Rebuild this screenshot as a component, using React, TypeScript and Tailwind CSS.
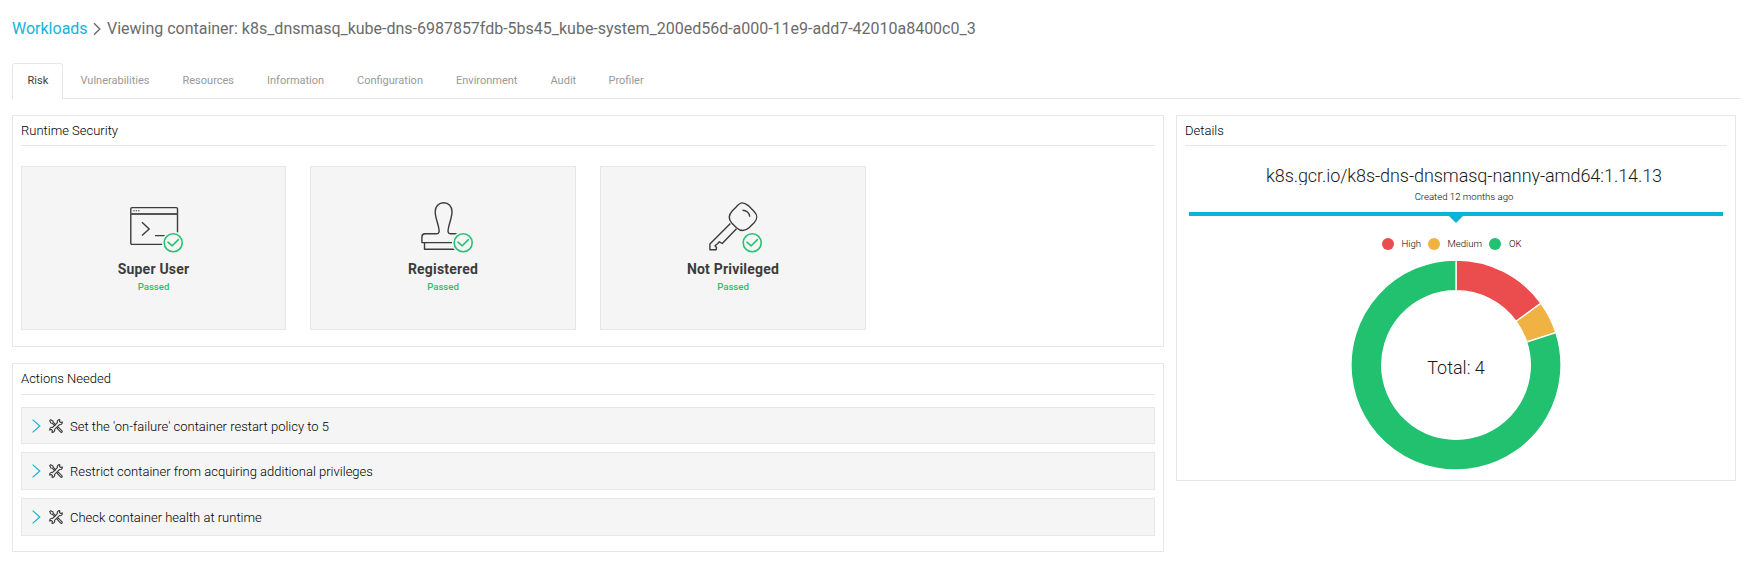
import type { ReactNode } from "react";

const tabs = [
  { label: "Vulnerabilities", width: "w-[102px]" },
  { label: "Resources", width: "w-[84.5px]" },
  { label: "Information", width: "w-[90px]" },
  { label: "Configuration", width: "w-[99px]" },
  { label: "Environment", width: "w-[94.5px]" },
  { label: "Audit", width: "w-[58px]" },
  { label: "Profiler", width: "w-[60px]" },
];

const actions = [
  "Set the 'on-failure' container restart policy to 5",
  "Restrict container from acquiring additional privileges",
  "Check container health at runtime",
];

function PassedBadge() {
  return (
    <g fill="none" stroke="#26c271" strokeWidth="1.6">
      <circle cx="43.2" cy="40.7" r="11.2" fill="#f5f5f5" stroke="none" />
      <circle cx="43.2" cy="40.7" r="9" />
      <path d="M38 40.2l4.2 3.6 6.2-6.2" strokeLinejoin="round" strokeLinecap="round" />
    </g>
  );
}

function IconFrame({ children }: { children: ReactNode }) {
  return (
    <svg width="54" height="52" viewBox="0 0 54 52" fill="none" stroke="#3c3c3c" strokeWidth="1.4" strokeLinejoin="round">
      {children}
      <PassedBadge />
    </svg>
  );
}

function TerminalIcon() {
  return (
    <IconFrame>
      <rect x="0.8" y="5.6" width="46.7" height="36.8" rx="1.2" />
      <path d="M1 12.1h46.3" stroke="#555555" strokeWidth="2" />
      <path d="M3.3 8.8h6.4" strokeDasharray="1.4 1" strokeWidth="1" />
      <path d="M12 20.2l7.2 6.8-7.2 6.6M25 33.6h12" />
    </IconFrame>
  );
}

function StampIcon() {
  return (
    <IconFrame>
      <path d="M48 34.5c0-1.6-1.2-2.8-2.800-2.800h-15c-2.400 0-2.400-2.600-1.900-4.800.5-4.700 3.700-11 3.700-17.400 0-5.200-3.300-8.800-8.300-8.800s-8.500 3.600-8.500 8.800c0 6.400 3.200 12.700 3.700 17.400.5 2.200.5 4.800-1.900 4.800h-12c-2 0-3.100 1.300-3.100 3.200v5.700h46.100z" />
      <path d="M4.500 40.700v6.500h39.500" />
    </IconFrame>
  );
}

function KeyIcon() {
  return (
    <IconFrame>
      <path d="M33 .9c2.800 0 4.600 1.300 6.300 2.700l5.600 5.600c4.100 4.300 4.100 7.400 0 11.700l-4.600 4.600c-4.500 4.100-8.500 4.300-12.800.3l-4.600-4.600c-4-4.300-3.500-8.200.5-12.500l4-4c2.100-2.200 3.500-3.800 5.600-3.800z" />
      <path d="M21.400 21.400L.9 42.100v5.600h6.300l.3-2.200-1.500-1.800 2.800-2.200 1.600-1.700 2.800 1.700 14.300-14.800" />
      <path d="M33.500 8.300c3.800 0 7 2.600 7.300 6.500" />
    </IconFrame>
  );
}

function ToolsIcon() {
  return (
    <svg className="ml-[8px] shrink-0" width="14" height="14" viewBox="0 0 14 14" fill="none" stroke="#3c3c3c" strokeWidth="1.1" strokeLinejoin="round">
      <path d="M10.900 .7c-1.600-.3-3.100 1.300-2.500 3L3.700 8.400C2 7.900.4 9.500.7 11.100l1.700-.6 1.100 1.100-.6 1.700c1.700.3 3.200-1.200 2.700-2.900l4.800-4.800c1.700.5 3.200-1.100 2.900-2.700l-1.700.6-1.100-1.100z" />
      <path d="M.7 1.700l1-1 2.300 1.200.2 1.300 2.400 2.400-1 1L3.200 4.200l-1.300-.2z" />
      <path d="M8.200 9.300l1.100-1.100 3.700 3.600c.8.800-.5 2-1.300 1.300z" />
    </svg>
  );
}

const cards = [
  { title: "Super User", icon: <TerminalIcon />, shift: "pl-[6px]", width: "w-[265px]" },
  { title: "Registered", icon: <StampIcon />, shift: "pl-[7px]", width: "w-[266px]" },
  { title: "Not Privileged", icon: <KeyIcon />, shift: "pl-[6px]", width: "w-[266px]" },
];

function Panel({
  title,
  className,
  headingClass = "h-[30px]",
  children,
}: {
  title: string;
  className: string;
  headingClass?: string;
  children: ReactNode;
}) {
  return (
    <section className={`border border-[#e7e7e7] px-2 ${className}`}>
      <h2 className={`border-b border-[#e7e7e7] pt-[5px] text-[13px] leading-[20px] font-light text-black ${headingClass}`}>
        {title}
      </h2>
      {children}
    </section>
  );
}

function slice(from: number, to: number) {
  const point = (t: number, r: number) =>
    `${105 + r * Math.sin(t * 2 * Math.PI)} ${105 - r * Math.cos(t * 2 * Math.PI)}`;
  const large = to - from > 0.5 ? 1 : 0;
  return `M${point(from, 105)}A105 105 0 ${large} 1 ${point(to, 105)}L${point(to, 74.3)}A74.3 74.3 0 ${large} 0 ${point(from, 74.3)}Z`;
}

function Donut() {
  return (
    <svg className="mx-auto block overflow-visible" width="210" height="210" viewBox="0 0 210 210">
      <g stroke="#ffffff" strokeWidth="1.3">
        <path d={slice(0, 0.15)} fill="#eb4d4f" />
        <path d={slice(0.15, 0.2)} fill="#f0b242" />
        <path d={slice(0.2, 1)} fill="#21c170" />
      </g>
      <text x="105" y="114" textAnchor="middle" fontSize="18" fontWeight="300" fill="#1a1a1a">Total: 4</text>
    </svg>
  );
}

export default function App() {
  return (
    <div className="h-[563px] w-[1753px] overflow-hidden bg-white pl-3 font-['Roboto',sans-serif] text-[#3c3c3c]">
      <header className="flex h-[63px] items-start pt-[17px] text-[16px] leading-[24px] text-[#6b6b6b]">
        <span className="w-[75px] whitespace-nowrap text-[#15b3d8]">Workloads</span>
        <svg className="mt-[5px] ml-[6px] shrink-0" width="8" height="14" viewBox="0 0 8 14" fill="none" stroke="#6b6b6b" strokeWidth="1.4">
          <path d="M1 1.300l5.800 5.700L1 12.700" />
        </svg>
        <span className="ml-[6px] whitespace-nowrap tracking-[-0.01px]">Viewing container: k8s_dnsmasq_kube-dns-6987857fdb-5bs45_kube-system_200ed56d-a000-11e9-add7-42010a8400c0_3</span>
      </header>

      <nav className="flex h-9 w-[1728px] text-[11px] leading-[34px] text-[#999999]">
        <div className="w-[51px] rounded-t-[3px] border border-b-0 border-[#e7e7e7] pl-[14.5px] text-[#3c3c3c]">Risk</div>
        <div className="flex grow border-b border-[#e7e7e7] pt-px pl-[17.5px]">
          {tabs.map((tab) => (
            <div key={tab.label} className={tab.width}>{tab.label}</div>
          ))}
        </div>
      </nav>

      <main className="mt-4 flex items-start gap-3">
        <div className="flex w-[1152px] flex-col gap-4">
          <Panel title="Runtime Security" className="h-[232px]">
            <div className="mt-[20px] flex gap-[24px]">
              {cards.map((card) => (
                <div key={card.title} className={`flex h-[164px] flex-col items-center border border-[#e7e7e7] bg-[#f5f5f5] pt-[35px] ${card.width}`}>
                  <div className={card.shift}>{card.icon}</div>
                  <div className="mt-[5px] text-[14px] leading-[20px] font-bold tracking-[0.2px]">{card.title}</div>
                  <div className="mt-px text-[9.600px] leading-[14px] font-medium text-[#26c271]">Passed</div>
                </div>
              ))}
            </div>
          </Panel>

          <Panel title="Actions Needed" className="h-[189px]" headingClass="h-[31px]">
            <div className="mt-[11.700px] flex flex-col gap-[7.900px]">
              {actions.map((action) => (
                <div key={action} className="flex h-[37.700px] items-center border border-[#e7e7e7] bg-[#f5f5f5] pl-[10px] text-[13px] font-light text-black">
                  <svg className="shrink-0" width="9" height="14" viewBox="0 0 9 14" fill="none" stroke="#15b3d8" strokeWidth="1.2">
                    <path d="M.6.600l7.200 6.400L.6 13.400" />
                  </svg>
                  <ToolsIcon />
                  <span className="mt-[2px] ml-[7px]">{action}</span>
                </div>
              ))}
            </div>
          </Panel>
        </div>

        <Panel title="Details" className="h-[366px] w-[560px]">
          <div className="flex flex-col items-center text-black">
            <div className="mt-[18px] ml-[16px] h-[21px] overflow-hidden text-[18px] leading-[24px] font-light tracking-[-0.07px] text-[#1a1a1a]">k8s.gcr.io/k8s-dns-dnsmasq-nanny-amd64:1.14.13</div>
            <div className="mt-[5px] pl-[16px] text-[9.600px] leading-[14px] font-light">Created 12 months ago</div>
            <div className="mt-[8px] h-1 w-[534px] bg-[#0db2d9]" />
            <svg width="14" height="7" viewBox="0 0 14 7">
              <path d="M0 0h14L7 7z" fill="#0db2d9" />
            </svg>
          </div>
          <div className="mt-[15px] flex h-[12px] pl-[197px] text-[9.600px] leading-[12px] font-light text-black">
            <i className="h-3 w-3 rounded-full bg-[#eb4d4f]" />
            <span className="ml-[7.500px] w-[26.500px]">High</span>
            <i className="h-3 w-3 rounded-full bg-[#f0b242]" />
            <span className="ml-[7.500px] w-[41.500px]">Medium</span>
            <i className="h-3 w-3 rounded-full bg-[#21c170]" />
            <span className="ml-[8px]">OK</span>
          </div>
          <div className="mt-[10px]">
            <Donut />
          </div>
        </Panel>
      </main>
    </div>
  );
}
